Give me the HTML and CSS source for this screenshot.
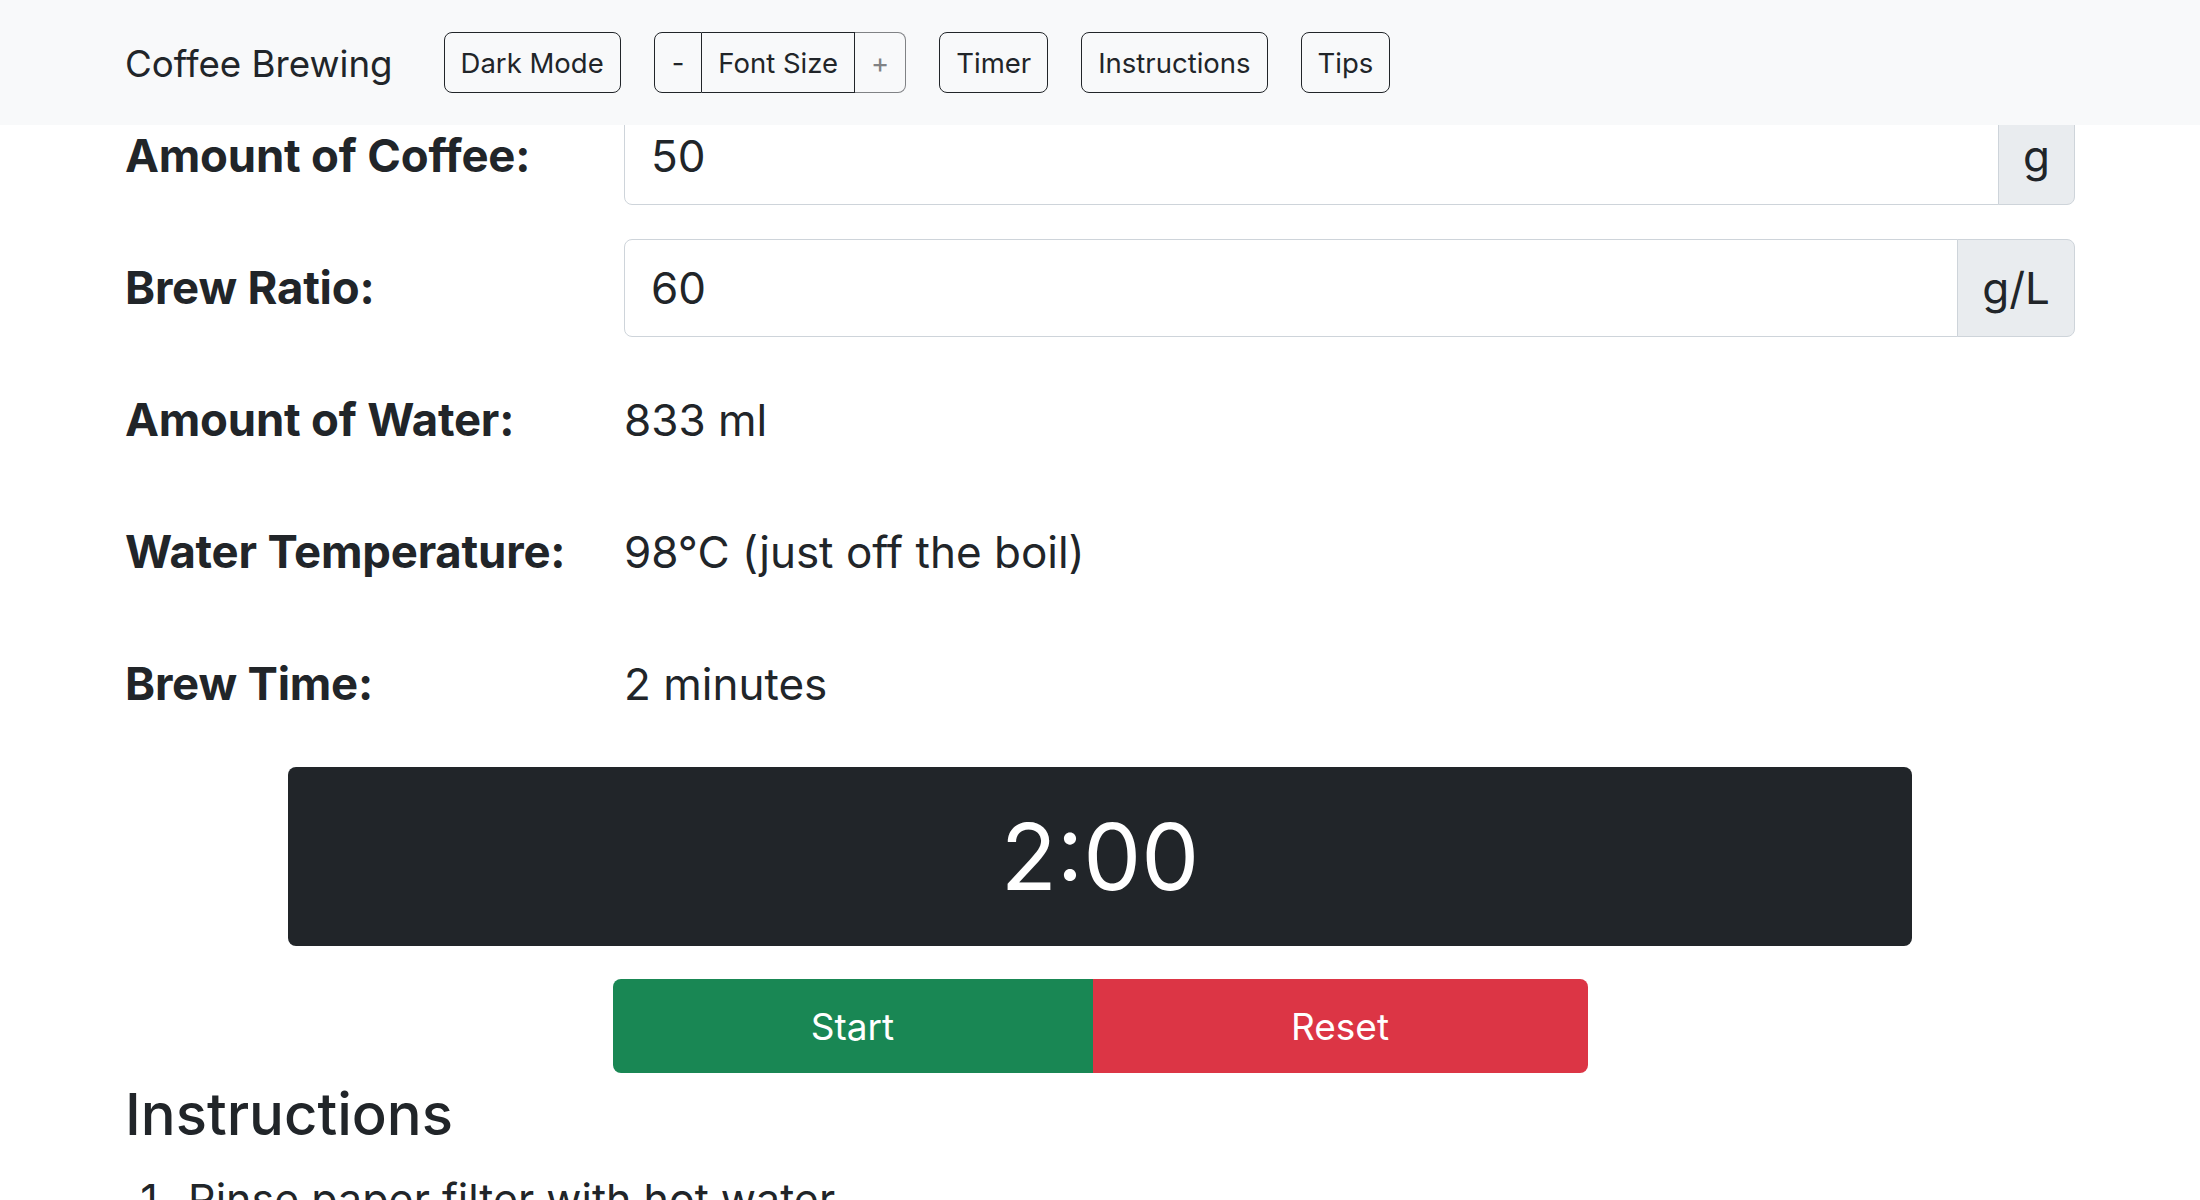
FILE: index.html
```html
<!DOCTYPE html>
<html lang="en">
<head>
<meta charset="utf-8">
<title>Coffee Brewing</title>
<link rel="stylesheet" href="styles.css">
</head>
<body>
<nav class="navbar">
  <div class="nav-inner">
    <span class="brand">Coffee Brewing</span>
    <div class="nav-buttons">
      <button class="btn">Dark Mode</button>
      <div class="btn-group">
        <button class="btn seg seg-first">-</button>
        <button class="btn seg seg-mid">Font Size</button>
        <button class="btn seg seg-last">+</button>
      </div>
      <button class="btn">Timer</button>
      <button class="btn">Instructions</button>
      <button class="btn">Tips</button>
    </div>
  </div>
</nav>

<main class="container">
  <section class="form">
    <div class="row">
      <label class="label">Amount of Coffee:</label>
      <div class="input-group">
        <span class="input">50</span>
        <span class="addon">g</span>
      </div>
    </div>
    <div class="row">
      <label class="label">Brew Ratio:</label>
      <div class="input-group">
        <span class="input">60</span>
        <span class="addon">g/L</span>
      </div>
    </div>
    <div class="row">
      <span class="label">Amount of Water:</span>
      <span class="value">833 ml</span>
    </div>
    <div class="row">
      <span class="label">Water Temperature:</span>
      <span class="value">98°C (just off the boil)</span>
    </div>
    <div class="row">
      <span class="label">Brew Time:</span>
      <span class="value">2 minutes</span>
    </div>
  </section>

  <section class="timer">
    <div class="timer-display">2:00</div>
    <div class="timer-controls">
      <button class="tbtn start">Start</button>
      <button class="tbtn reset">Reset</button>
    </div>
  </section>

  <section class="instructions">
    <h2 class="heading">Instructions</h2>
    <ol class="steps">
      <li>Rinse paper filter with hot water</li>
    </ol>
  </section>
</main>
</body>
</html>
```

FILE: styles.css
```css
* {
  box-sizing: border-box;
}

html, body {
  margin: 0;
  padding: 0;
  background: #ffffff;
}

body {
  font-family: Inter, "Liberation Sans", sans-serif;
  color: #212529;
  overflow: hidden;
}

/* Navbar */
.navbar {
  position: fixed;
  top: 0;
  left: 0;
  right: 0;
  height: 125px;
  background: #f8f9fa;
  z-index: 10;
}

.nav-inner {
  width: 1950px;
  height: 100%;
  margin: 0 auto;
  display: flex;
  align-items: center;
}

.brand {
  font-size: 36.7px;
  line-height: 1;
  color: #212529;
  margin-right: 51px;
  padding-top: 4px;
}

.nav-buttons {
  display: flex;
  align-items: center;
  gap: 33px;
}

.btn {
  font-family: Inter, "Liberation Sans", sans-serif;
  font-size: 27.5px;
  line-height: 40px;
  height: 61px;
  padding: 0 16px;
  background: transparent;
  color: #212529;
  border: 1px solid #212529;
  border-radius: 8px;
}

.btn-group {
  display: flex;
}

.seg {
  border-radius: 0;
}

.seg-first {
  border-radius: 8px 0 0 8px;
  padding: 0 17px;
}

.seg-mid {
  border-left: none;
}

.seg-last {
  border-left: none;
  border-radius: 0 8px 8px 0;
  border-color: #808285;
  color: #808285;
}

/* Form */
.container {
  width: 1950px;
  margin: 0 auto;
  padding-top: 107px;
}

.form {
  display: flex;
  flex-direction: column;
  gap: 34px;
}

.row {
  display: grid;
  grid-template-columns: 453px 1fr;
  column-gap: 46px;
  align-items: center;
  height: 98px;
}

.label {
  font-size: 45.5px;
  font-weight: 700;
  line-height: 66px;
  letter-spacing: -0.2px;
}

.value {
  font-size: 44px;
  line-height: 66px;
}

.input-group {
  display: flex;
  height: 98px;
}

.input {
  flex: 1;
  font-size: 44px;
  line-height: 66px;
  padding: 15px 26px;
  border: 1px solid #ced4da;
  border-radius: 8px 0 0 8px;
  background: #ffffff;
}

.addon {
  font-size: 44px;
  line-height: 66px;
  padding: 15px 24px;
  background: #e9ecef;
  border: 1px solid #ced4da;
  border-radius: 0 8px 8px 0;
  margin-left: -1px;
}

/* Timer */
.timer {
  margin-top: 34px;
  display: flex;
  flex-direction: column;
  align-items: center;
}

.timer-display {
  width: 1624px;
  height: 179px;
  background: #212529;
  color: #ffffff;
  border-radius: 8px;
  display: flex;
  align-items: center;
  justify-content: center;
  font-size: 92px;
  line-height: 1;
}

.timer-controls {
  margin-top: 33px;
  display: grid;
  grid-template-columns: 480px 495px;
}

.tbtn {
  font-family: Inter, "Liberation Sans", sans-serif;
  height: 94px;
  font-size: 37px;
  color: #ffffff;
  border: none;
}

.start {
  background: #198754;
  border-radius: 8px 0 0 8px;
}

.reset {
  background: #dc3545;
  border-radius: 0 8px 8px 0;
}

/* Instructions */
.instructions {
  margin-top: 7px;
}

.heading {
  font-size: 58px;
  font-weight: 500;
  line-height: 68px;
  margin: 0 0 18px;
}

.steps {
  margin: 0;
  padding-left: 63px;
  font-size: 43px;
  line-height: 66px;
}
```
